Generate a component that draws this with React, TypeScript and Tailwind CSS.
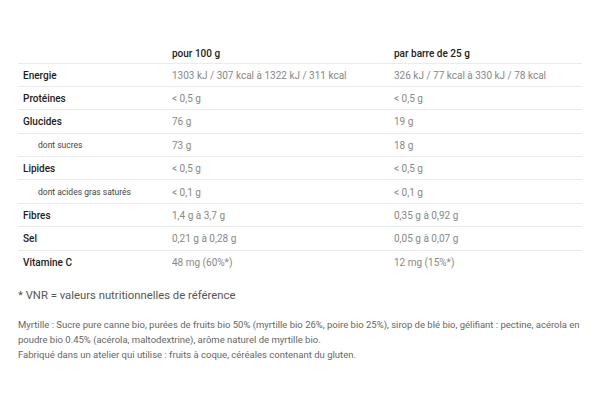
const rows: { label: string; sub?: boolean; a: string; b: string }[] = [
  { label: "Energie", a: "1303 kJ / 307 kcal à 1322 kJ / 311 kcal", b: "326 kJ / 77 kcal à 330 kJ / 78 kcal" },
  { label: "Protéines", a: "< 0,5 g", b: "< 0,5 g" },
  { label: "Glucides", a: "76 g", b: "19 g" },
  { label: "dont sucres", sub: true, a: "73 g", b: "18 g" },
  { label: "Lipides", a: "< 0,5 g", b: "< 0,5 g" },
  { label: "dont acides gras saturés", sub: true, a: "< 0,1 g", b: "< 0,1 g" },
  { label: "Fibres", a: "1,4 g à 3,7 g", b: "0,35 g à 0,92 g" },
  { label: "Sel", a: "0,21 g à 0,28 g", b: "0,05 g à 0,07 g" },
  { label: "Vitamine C", a: "48 mg (60%*)", b: "12 mg (15%*)" },
];

export default function App() {
  return (
    <div className="w-[600px] h-[408px] bg-white overflow-hidden font-['Roboto',sans-serif]">
      <div className="pt-[40px] px-[18px]">
        <div className="flex h-[23.5px] items-end pb-[2px] border-b border-[#ebebeb] text-[10px] font-medium text-[#222]">
          <div className="w-[154px]" />
          <div className="w-[222px]">pour 100 g</div>
          <div className="flex-1">par barre de 25 g</div>
        </div>
        {rows.map((r, i) => (
          <div
            key={r.label}
            className={`flex h-[23.4px] items-center pt-[1px] ${i < rows.length - 1 ? "border-b border-[#ebebeb]" : ""}`}
          >
            <div
              className={
                r.sub
                  ? "w-[154px] pl-[20px] text-[8.5px] text-[#444]"
                  : "w-[154px] pl-[5px] text-[10px] font-medium text-[#222]"
              }
            >
              {r.label}
            </div>
            <div className="w-[222px] text-[10px] text-[#888]">{r.a}</div>
            <div className="flex-1 text-[10px] text-[#888]">{r.b}</div>
          </div>
        ))}
        <div className="mt-[14px] text-[11.3px] text-[#555]">* VNR = valeurs nutritionnelles de référence</div>
        <div className="mt-[12px] text-[9.5px] leading-[15px] text-[#666]">
          Myrtille : Sucre pure canne bio, purées de fruits bio 50% (myrtille bio 26%, poire bio 25%), sirop de blé bio, gélifiant : pectine, acérola en poudre bio 0.45% (acérola, maltodextrine), arôme naturel de myrtille bio.
          <br />
          Fabriqué dans un atelier qui utilise : fruits à coque, céréales contenant du gluten.
        </div>
      </div>
    </div>
  );
}
